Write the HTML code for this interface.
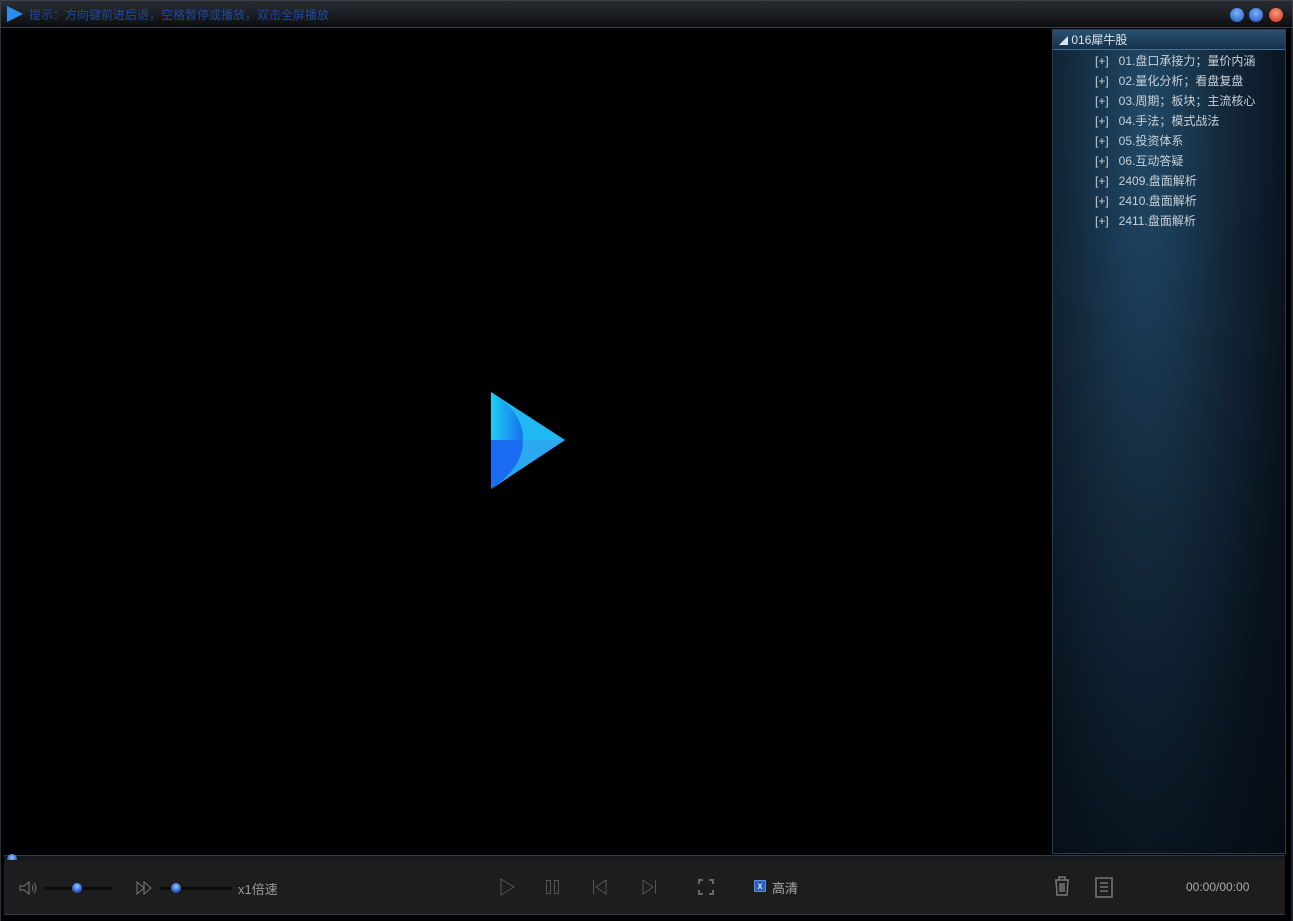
<!DOCTYPE html>
<html><head><meta charset="utf-8"><style>
*{margin:0;padding:0;box-sizing:border-box}
body{width:1293px;height:921px;background:#000;position:relative;overflow:hidden;font-family:"Liberation Sans","Noto Sans CJK SC",sans-serif}
.t{position:absolute}
#title{left:0;top:0;width:1293px;height:28px;background:linear-gradient(#2a2e34,#0c0d10);border:1px solid #3a3f48}
#panel{left:1052px;top:29px;width:234px;height:825px;border:1px solid #2c3e4e;background:radial-gradient(ellipse at 40% 10%,#224a68 0%,#13293c 40%,#08121c 75%,#060c14 100%)}
#ph{left:0;top:0;width:232px;height:20px;background:linear-gradient(#2a5272,#163048);border-bottom:1px solid #4a7090;color:#d8e4ee;font-size:12px;line-height:20px;padding-left:6px}
.it{position:absolute;left:42px;color:#c8d0d8;font-size:12px;white-space:pre}
#bar{left:4px;top:860px;width:1281px;height:55px;background:#1d1d1d;border-bottom:1px solid #2a3850}
.knob{position:absolute;width:10px;height:10px;border-radius:50%;background:radial-gradient(circle at 50% 35%,#9cc4ff,#2a62d0 60%,#1a3a90)}
.trk{position:absolute;height:3px;background:#0c0c0c;border-radius:2px}
.dot{position:absolute;top:7px;width:14px;height:14px;border-radius:50%}
</style></head><body>
<div id="title" class="t">
<svg class="t" style="left:5px;top:5px" width="18" height="16"><polygon points="1,0 17,8 1,16" fill="#2a8ef0"/></svg>
<div class="t" style="left:28px;top:5px;font-size:12px;color:#1c4a9c">提示：方向键前进后退，空格暂停或播放，双击全屏播放</div>
<div class="dot" style="left:1229px;background:radial-gradient(circle at 50% 35%,#7ab0ff,#1e56b8)"></div>
<div class="dot" style="left:1248px;background:radial-gradient(circle at 50% 35%,#7ab0ff,#1e56b8)"></div>
<div class="dot" style="left:1268px;background:radial-gradient(circle at 50% 35%,#ff9a7a,#c82a1a)"></div>
</div>
<div class="t" style="left:0;top:28px;width:1px;height:893px;background:#2a3040"></div>
<div class="t" style="right:0;top:28px;width:2px;height:893px;background:#1c2230"></div>
<svg class="t" style="left:490px;top:391px" width="76" height="100">
<defs><linearGradient id="a" x1="0" y1="0" x2="1" y2="0"><stop offset="0" stop-color="#1ad0f0"/><stop offset="1" stop-color="#1a70f0"/></linearGradient></defs>
<polygon points="1,1 75,49 1,98" fill="#20b8f0"/>
<path d="M1,1 Q34,22 33,49 L1,49Z" fill="url(#a)"/>
<path d="M1,49 L33,49 Q34,76 1,98Z" fill="#1a6cf0"/>
<path d="M33,49 L75,49 L1,98 Q34,76 33,49Z" fill="#2aa8f0"/>
</svg>
<div id="panel" class="t">
<div id="ph" class="t"><span style="font-size:9px">◢</span> 016犀牛股</div>
<div class="it" style="top:22px">[+]   01.盘口承接力；量价内涵</div>
<div class="it" style="top:42px">[+]   02.量化分析；看盘复盘</div>
<div class="it" style="top:62px">[+]   03.周期；板块；主流核心</div>
<div class="it" style="top:82px">[+]   04.手法；模式战法</div>
<div class="it" style="top:102px">[+]   05.投资体系</div>
<div class="it" style="top:122px">[+]   06.互动答疑</div>
<div class="it" style="top:142px">[+]   2409.盘面解析</div>
<div class="it" style="top:162px">[+]   2410.盘面解析</div>
<div class="it" style="top:182px">[+]   2411.盘面解析</div>
</div>
<div class="t" style="left:4px;top:855px;width:1281px;height:5px;background:#15181e;border-top:1px solid #2c3a4c"></div>
<div class="knob" style="left:7px;top:854px"></div>
<div id="bar" class="t">
<svg class="t" style="left:15px;top:21px" width="20" height="14" fill="none" stroke="#777" stroke-width="1"><path d="M1,5 H5 L10,1 V13 L5,9 H1Z M13,4 Q15,7 13,10 M15,2 Q19,7 15,12"/></svg>
<div class="trk" style="left:40px;top:27px;width:68px"></div>
<div class="knob" style="left:68px;top:23px"></div>
<svg class="t" style="left:132px;top:21px" width="18" height="14" fill="none" stroke="#777"><path d="M1,1 L8,7 L1,13Z M8,1 L15,7 L8,13Z"/></svg>
<div class="trk" style="left:156px;top:27px;width:72px"></div>
<div class="knob" style="left:167px;top:23px"></div>
<div class="t" style="left:234px;top:19px;font-size:13px;color:#999">x1倍速</div>
<svg class="t" style="left:496px;top:18px" width="16" height="18" fill="none" stroke="#555"><path d="M1,1 L14,9 L1,17Z"/></svg>
<svg class="t" style="left:541px;top:19px" width="16" height="16" fill="none" stroke="#555"><rect x="1.5" y="1.5" width="4" height="13"/><rect x="9.5" y="1.5" width="4" height="13"/></svg>
<svg class="t" style="left:588px;top:19px" width="16" height="16" fill="none" stroke="#555"><path d="M1.5,1 V15 M14,1 L4,8 L14,15Z"/></svg>
<svg class="t" style="left:637px;top:19px" width="16" height="16" fill="none" stroke="#555"><path d="M14.5,1 V15 M2,1 L12,8 L2,15Z"/></svg>
<svg class="t" style="left:694px;top:19px" width="16" height="16" fill="none" stroke="#666" stroke-width="2"><path d="M1,5 V1 H5 M11,1 H15 V5 M15,11 V15 H11 M5,15 H1 V11"/></svg>
<div class="t" style="left:750px;top:20px;width:12px;height:12px;background:#2a60b8;color:#fff;font-size:10px;line-height:12px;text-align:center;border:1px solid #5a8ad8">x</div>
<div class="t" style="left:768px;top:18px;font-size:13px;color:#aaa">高清</div>
<svg class="t" style="left:1049px;top:15px" width="18" height="22" fill="none" stroke="#777" stroke-width="1.5"><path d="M2,5 H16 M6,5 V2 H12 V5 M3,5 L4,20 H14 L15,5 M7,8 V17 M9,8 V17 M11,8 V17"/></svg>
<svg class="t" style="left:1091px;top:17px" width="18" height="21" fill="none" stroke="#777" stroke-width="1.5"><rect x="1" y="1" width="16" height="19"/><path d="M5,6 H13 M5,10 H13 M5,14 H13"/></svg>
<div class="t" style="left:1182px;top:20px;font-size:12px;color:#aaa">00:00/00:00</div>
</div>
</body></html>
